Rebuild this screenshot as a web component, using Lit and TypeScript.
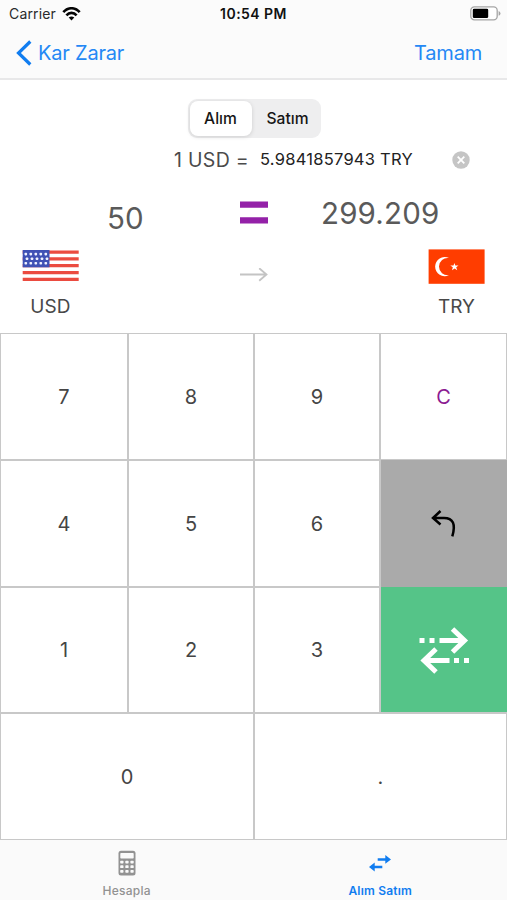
import { LitElement, html, svg, css } from "lit";
import { customElement, state } from "lit/decorators.js";

const starRows = [
  [26.3, 4.8],
  [27.5, 9.5],
  [26.3, 14],
];

@customElement("status-bar")
class StatusBar extends LitElement {
  static styles = css`
    :host { display: grid; grid-template-columns: 1fr auto 1fr; align-items: center; height: 27px; padding: 0 6px 0 9px; color: #2a2a2c; }
    .left { display: flex; align-items: center; gap: 6px; font-size: 14px; line-height: 27px; letter-spacing: 0.15px; }
    .time { font-size: 14px; font-weight: 600; letter-spacing: 0.45px; line-height: 27px; color: #111; margin-left: -3px; }
    .right { display: flex; justify-content: flex-end; }
    svg { display: block; }
  `;
  render() {
    return html`
      <div class="left"><span>Carrier</span>
        <svg width="19" height="14" viewBox="0 0 19 14">
          <g fill="none" stroke="#050505" stroke-width="2.6">
            <path d="M1.3 5.2C6 -0.1 13 -0.1 17.7 5.2" />
            <path d="M4.4 8.3C7.3 5 11.7 5 14.6 8.3" />
          </g>
          <path d="M9.5 13.6L6.7 10.6Q9.5 8.3 12.3 10.6Z" fill="#050505" />
        </svg>
      </div>
      <div class="time">10:54 PM</div>
      <div class="right">
        <svg width="31" height="15" viewBox="0 0 31 15">
          <rect x="0.8" y="0.8" width="26.4" height="13" rx="3.6" fill="#fff" stroke="#a5a5a5" stroke-width="1.3" />
          <rect x="2.8" y="2.7" width="15.4" height="9.4" rx="1.4" fill="#000" />
          <path d="M28.6 5V9.8Q30.5 9 30.5 7.4T28.6 5" fill="#a5a5a5" />
        </svg>
      </div>`;
  }
}

@customElement("key-pad")
class KeyPad extends LitElement {
  static styles = css`
    :host { display: grid; grid-template-columns: 126px 124px 124px 125px; grid-template-rows: 125px 125px 124px 125px; gap: 2px;
      padding: 1px; background: #c8c8c8; box-sizing: border-box; width: 100%; height: 507px; }
    .key { display: flex; align-items: center; justify-content: center; background: #fff; color: #454545; font-size: 20px; line-height: 24px; }
    .wide { grid-column: span 2; }
    .clear { color: #8b1a91; }
    .undo { background: #aaa; margin: -1px -1px -1px 0; }
    .swap { background: #55c488; margin: -1px -1px 0 0; }
    svg { display: block; }
  `;
  render() {
    const n = (d: string) => html`<div class="key">${d}</div>`;
    return html`
      ${n("7")}${n("8")}${n("9")}<div class="key clear">C</div>
      ${n("4")}${n("5")}${n("6")}
      <div class="key undo"><svg width="26" height="28" viewBox="0 0 26 28" fill="none" stroke="#000" stroke-width="2.5">
        <path d="M9.5 1L2 8L9.5 14.5M2.5 8H13C22 8 25 14 21.3 26.3" />
      </svg></div>
      ${n("1")}${n("2")}${n("3")}
      <div class="key swap"><svg width="50" height="48" viewBox="0 0 50 48">
        <g fill="none" stroke="#fff" stroke-width="5">
          <path d="M20.5 14.5H46M33.5 3L45.5 14.5L33.5 26M30.5 34.5H5M17 23L5 34.5L17 46" />
        </g>
        <path d="M.5 12h5v5h-5zM10.5 12h5v5h-5zM35 32h5v5h-5zM45 32h5v5h-5z" fill="#fff" />
      </svg></div>
      <div class="key wide">0</div><div class="key wide">.</div>`;
  }
}

@customElement("tab-bar")
class TabBar extends LitElement {
  static styles = css`
    :host { display: grid; grid-template-columns: 1fr 1fr; height: 60px; background: #fafafa; }
    .tab { display: flex; flex-direction: column; align-items: center; padding-top: 9px; color: #929292; font-size: 12px; font-weight: 500; line-height: 16px; letter-spacing: 0.25px; }
    .active { color: #117df0; font-weight: 600; letter-spacing: 0.2px; }
    .icon { display: flex; align-items: center; justify-content: center; height: 28px; margin-bottom: 6px; }
    svg { display: block; }
  `;
  render() {
    return html`
      <div class="tab"><div class="icon"><svg width="18" height="26" viewBox="0 0 18 26">
        <rect x="0.5" y="0.8" width="17" height="24.6" rx="2.5" fill="#929292" />
        <rect x="2.3" y="3" width="13.4" height="5.5" rx="0.8" fill="#fafafa" />
        ${[10.7, 15.3, 20].map((y) => [2.2, 7.3, 12.4].map((x) => svg`<rect x=${x} y=${y} width="3.3" height="2.8" rx="0.7" fill="#fafafa" />`))}
      </svg></div>Hesapla</div>
      <div class="tab active"><div class="icon"><svg width="22" height="18" viewBox="0 0 22 18">
        <path d="M8.7 5.4H17M13.3 13H5" stroke="#117df0" stroke-width="2.5" />
        <path d="M16.3 1.1L22 5.4L16.3 9.8zM5.7 8.6L0 13L5.7 17.4z" fill="#117df0" />
      </svg></div>Alım Satım</div>`;
  }
}

@customElement("app-root")
class AppRoot extends LitElement {
  @state() private amount = "50";
  @state() private result = "299.209";

  static styles = css`
    :host { display: flex; flex-direction: column; height: 900px; width: 507px; overflow: hidden; background: #fff; font-family: Inter, "Liberation Sans", sans-serif; }
    svg { display: block; }
    .top { height: 80px; box-sizing: border-box; background: #fbfbfb; border-bottom: 2px solid #e8e8e9; }
    .nav { display: flex; justify-content: space-between; align-items: center; height: 51px; padding: 0 25px 0 16px; color: #2488f5; font-size: 20px; letter-spacing: -0.2px; }
    .back { display: flex; align-items: center; gap: 6px; }
    .quote { height: 253px; display: flex; flex-direction: column; }
    .segments { display: grid; grid-template-columns: 62px 1fr; width: 133px; height: 39px; padding: 2px; box-sizing: border-box; margin: 19px 0 0 188px; border-radius: 9px; background: #eeeeef; font-size: 15.6px; font-weight: 500; color: #161616; }
    .segment { display: flex; align-items: center; justify-content: center; border-radius: 8px; padding: 0 1px 1px 0; }
    .segment + .segment { padding-left: 5px; }
    .chosen { background: #fff; box-shadow: 0 1px 4px #0002; }
    .rate { display: flex; align-items: center; height: 43px; padding-left: 174px; color: #4b4b4b; }
    .unit { width: 86px; font-size: 19.5px; letter-spacing: 0.3px; }
    .value { width: 192px; font-size: 16.5px; letter-spacing: 0.25px; color: #222; padding-bottom: 1px; }
    .amounts { display: grid; grid-template-columns: 1fr 28px 1fr; height: 64px; align-items: center; color: #5a5a5a; font-size: 29.5px; line-height: 36px; text-align: center; }
    .from { padding: 9px 0 0 11px; }
    .to { padding-right: 14px; letter-spacing: 0.2px; }
    .pair { display: flex; justify-content: space-between; padding: 4px 22px 0; }
    .currency { display: flex; flex-direction: column; align-items: center; width: 57px; font-size: 19px; line-height: 24px; color: #484848; gap: 11px; letter-spacing: 0.1px; }
    .arrow { padding-top: 18.5px; }
  `;

  render() {
    return html`
      <div class="top">
        <status-bar></status-bar>
        <div class="nav">
          <div class="back"><svg width="16" height="26" viewBox="0 0 16 26"><path d="M14.3 1.5L2.5 13L14.3 24.5" fill="none" stroke="#117df0" stroke-width="3.2" /></svg><span>Kar Zarar</span></div>
          <span>Tamam</span>
        </div>
      </div>
      <div class="quote">
        <div class="segments"><div class="segment chosen">Alım</div><div class="segment">Satım</div></div>
        <div class="rate"><span class="unit">1 USD =</span><span class="value">5.9841857943 TRY</span>
          <svg width="18" height="18" viewBox="0 0 18 18"><circle cx="9" cy="9" r="8.7" fill="#c5c5c5" /><path d="M5.7 5.7L12.3 12.3M12.3 5.7L5.7 12.3" stroke="#fff" stroke-width="1.8" /></svg>
        </div>
        <div class="amounts">
          <span class="from">${this.amount}</span>
          <svg width="28" height="24" viewBox="0 0 28 24"><path d="M0 .5h28v6.2H0zM0 16.2h28v6.2H0z" fill="#9421a8" /></svg>
          <span class="to">${this.result}</span>
        </div>
        <div class="pair">
          <div class="currency">
            <svg width="57" height="35" viewBox="0 0 57 35">
              <path d="M.7 1.5h56v3.2h-56zM.7 8.3h56v3.2h-56zM.7 15.1h56v3.2h-56zM.7 22h56v3.2h-56zM.7 28.8h56v3.2h-56z" fill="#eb4b40" />
              <rect x="0.7" y="1" width="26.8" height="17.3" fill="#3f51b5" />
              ${starRows.map(([x, y]) => [0, 1, 2, 3, 4].map((i) => svg`<rect x=${x - 23.8 + i * 5} y=${y - 1} width="2.6" height="2.6" rx="0.8" fill="#f0f3ff" />`))}
            </svg><span>USD</span>
          </div>
          <svg class="arrow" width="28" height="14" viewBox="0 0 28 14"><path d="M0 7H26.5M19.2 .7L26.5 7L19.2 13.3" fill="none" stroke="#c4c4c4" stroke-width="1.8" /></svg>
          <div class="currency">
            <svg width="57" height="35" viewBox="0 0 57 35"><rect x="0.6" y="0.4" width="56" height="34.4" fill="#ff3d00" />
              <path d="M21 9A9.6 9.6 0 1 0 21 26.2A8.7 8.7 0 1 1 21 9Z" fill="#fff" />
              <path d="M26.4 14L27.3 16.4L30.5 16.4L28.2 18.2L29.2 21.2L26.7 19.4L24 21.2L24.8 18.3L22.3 16.6L25.5 16.5Z" fill="#fff" />
            </svg><span>TRY</span>
          </div>
        </div>
      </div>
      <key-pad></key-pad>
      <tab-bar></tab-bar>`;
  }
}
